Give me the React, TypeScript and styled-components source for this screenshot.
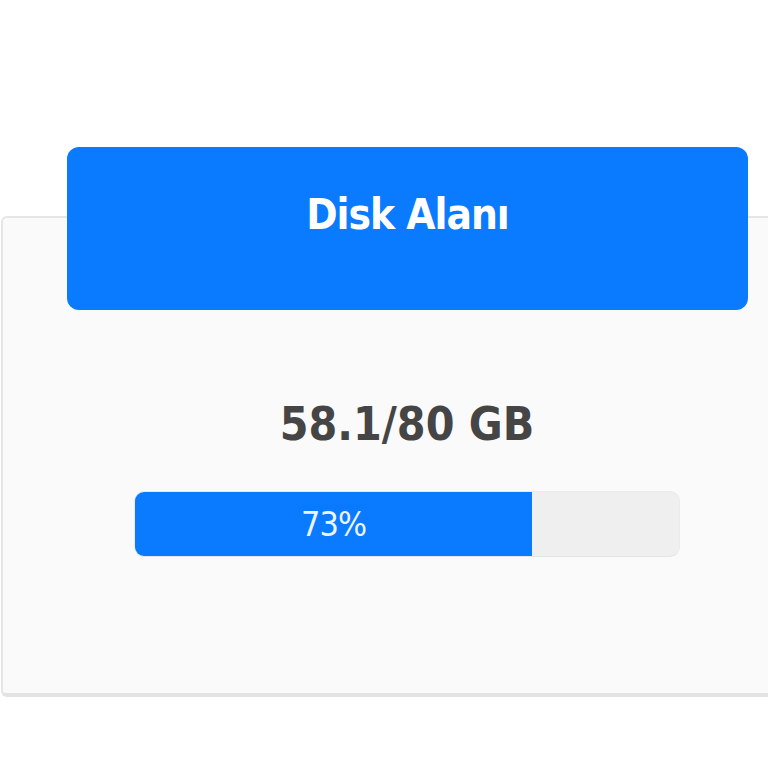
import React from "react"
import styled, { createGlobalStyle } from "styled-components"

const GlobalStyle = createGlobalStyle`
  html, body {
    margin: 0;
    padding: 0;
    background: #ffffff;
    overflow: hidden;
  }
  body {
    font-family: "DejaVu Sans Condensed", "Liberation Sans Narrow", "DejaVu Sans", sans-serif;
  }
`

const used = 58.1
const total = 80
const percent = Math.round((used / total) * 100)

const App = () => {
  return (
    <>
      <GlobalStyle />
      <Page>
        <Card>
          <CardHeader>
            <HeaderTitle>Disk Alanı</HeaderTitle>
          </CardHeader>
          <CardBody>
            <Usage>
              {used}/{total} GB
            </Usage>
            <Track>
              <Fill style={{ width: `${percent}%` }}>
                <FillLabel>{percent}%</FillLabel>
              </Fill>
            </Track>
          </CardBody>
        </Card>
      </Page>
    </>
  )
}

const Page = styled.main`
  width: 768px;
  height: 768px;
  padding-top: 216px;
  box-sizing: border-box;
`
const Card = styled.section`
  margin-left: 1px;
  width: 767px;
  height: 481px;
  box-sizing: border-box;
  background: #fafafa;
  border: 2px solid #e6e6e6;
  border-bottom: 4px solid #e3e3e3;
  border-right: none;
  border-radius: 6px 0 0 6px;
  display: flex;
  flex-direction: column;
`
const CardHeader = styled.header`
  margin: -71px 0 0 64px;
  width: 681px;
  height: 163px;
  background: #0a7aff;
  border-radius: 12px;
  display: flex;
  justify-content: center;
  align-items: center;
  padding-bottom: 28px;
  box-sizing: border-box;
`
const HeaderTitle = styled.h2`
  margin: 0;
  color: #ffffff;
  font-size: 42px;
  font-weight: 700;
  letter-spacing: -1px;
`
const CardBody = styled.div`
  display: flex;
  flex-direction: column;
  align-items: flex-start;
  padding: 87px 0 0 131px;
`
const Usage = styled.div`
  width: 546px;
  text-align: center;
  color: #454545;
  font-size: 46px;
  font-weight: 700;
  line-height: 54px;
`
const Track = styled.div`
  margin-top: 40px;
  width: 546px;
  height: 66px;
  background: #efefef;
  border: 1px solid #ebebeb;
  border-bottom-color: #e4e4e4;
  box-sizing: border-box;
  border-radius: 10px;
  overflow: hidden;
  display: flex;
`
const Fill = styled.div`
  height: 100%;
  background: #0a7aff;
  display: flex;
  justify-content: center;
  align-items: center;
`
const FillLabel = styled.span`
  color: #ffffff;
  font-size: 34px;
  font-weight: 400;
  letter-spacing: -1px;
  opacity: 0.92;
`

export default App
